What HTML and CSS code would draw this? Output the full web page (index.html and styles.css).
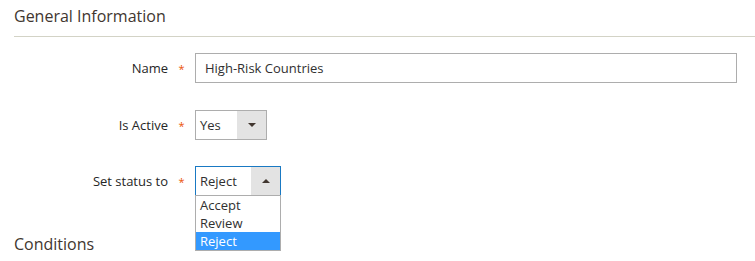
FILE: index.html
```html
<!DOCTYPE html>
<html>
<head>
<meta charset="utf-8">
<link rel="stylesheet" href="styles.css">
</head>
<body>
<section class="fieldset">
  <h2 class="title">General Information</h2>
  <div class="rule"></div>
  <div class="rows">
    <div class="row">
      <label class="label">Name</label><span class="star">*</span>
      <div class="input">High-Risk Countries</div>
    </div>
    <div class="row">
      <label class="label">Is Active</label><span class="star">*</span>
      <div class="select active-select"><span class="val">Yes</span><span class="arrow"><span class="tri down"></span></span></div>
    </div>
    <div class="row row-last">
      <label class="label">Set status to</label><span class="star">*</span>
      <div class="select status-select open"><span class="val">Reject</span><span class="arrow"><span class="tri up"></span></span>
        <ul class="options">
          <li>Accept</li>
          <li>Review</li>
          <li class="sel">Reject</li>
        </ul>
      </div>
    </div>
  </div>
  <h2 class="title cond">Conditions</h2>
</section>
</body>
</html>
```
FILE: styles.css
```css
html, body { margin: 0; padding: 0; background: #fff; }
body { font-family: "Open Sans", "Noto Sans", sans-serif; color: #303030; font-size: 13px; width: 755px; height: 261px; overflow: hidden; }
.fieldset { padding: 0; }
.title { margin: 0; padding: 4px 0 0 14px; font-size: 16px; line-height: 24px; font-weight: 400; color: #41362f; }
.rule { margin: 8px 0 0 14px; border-top: 1px solid #d3d3c6; }
.rows { display: flex; flex-direction: column; gap: 27px; margin-top: 16px; }
.row-last { margin-top: -1px; }
.row { display: flex; align-items: center; height: 30px; }
.label { width: 168px; text-align: right; font-size: 13px; font-weight: 400; color: #262626; }
.star { width: 27px; text-align: center; color: #eb5202; font-size: 11px; position: relative; top: 0; }
.input { width: 542px; height: 30px; box-sizing: border-box; border: 1px solid #adadad; padding: 0 9px; line-height: 28px; font-size: 13px; }
.select { height: 30px; box-sizing: border-box; border: 1px solid #adadad; display: flex; align-items: stretch; position: relative; font-size: 13px; }
.select .val { flex: 1; padding-left: 4px; line-height: 28px; }
.select .arrow { width: 29px; background: #e3e3e3; display: flex; align-items: center; justify-content: center; }
.active-select { width: 72px; }
.status-select { width: 86px; border-color: #1979c3; }
.tri { width: 0; height: 0; border-left: 4px solid transparent; border-right: 4px solid transparent; }
.tri.down { border-top: 4px solid #41362f; }
.tri.up { border-bottom: 4px solid #41362f; }
.options { position: absolute; left: -1px; top: 28px; width: 86px; box-sizing: border-box; margin: 0; padding: 0; list-style: none; border: 1px solid #adadad; background: #fff; }
.options li { height: 18px; line-height: 18px; padding-left: 4px; font-size: 13px; color: #303030; }
.options li.sel { background: #3399ff; color: #fff; }
.cond { margin-top: 36px; padding-top: 0; }
```
